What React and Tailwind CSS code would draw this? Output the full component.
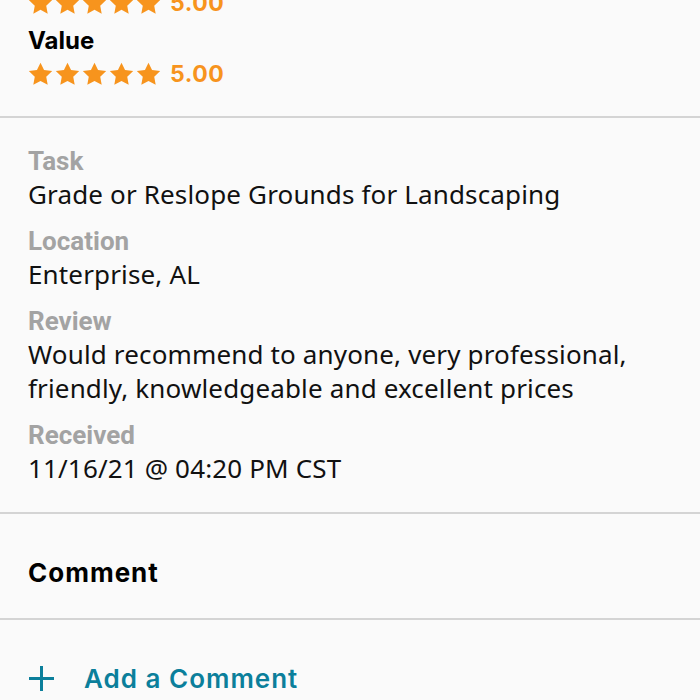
import React from "react";

const Star = () => (
  <svg width="25" height="24" viewBox="0 0 24 23" className="shrink-0">
    <path d="M12 0.6l3.4 7.1 7.8 1-5.7 5.4 1.4 7.7L12 18.1l-6.9 3.7 1.4-7.7L0.8 8.7l7.8-1z" fill="#f7941d" />
  </svg>
);

const Rating = () => (
  <div className="flex items-center h-[24px]">
    <div className="flex gap-[2px]">
      <Star /><Star /><Star /><Star /><Star />
    </div>
    <span className="ml-[9px] text-[23px] font-bold tracking-[0.5px] text-[#f7941d] leading-none" style={{ fontFamily: "Inter, sans-serif" }}>5.00</span>
  </div>
);

const Field = ({ label, children }) => (
  <div className="flex flex-col">
    <div className="text-[26px] font-bold text-[#a3a3a3] leading-[32px]" style={{ fontFamily: "Roboto, sans-serif" }}>{label}</div>
    <div className="text-[26px] tracking-[0.15px] text-[#111] leading-[34px]" style={{ fontFamily: "'Noto Sans', sans-serif" }}>{children}</div>
  </div>
);

export default function App() {
  return (
    <div className="w-[700px] h-[700px] overflow-hidden bg-[#fafafa]">
      <div className="-mt-[9px] px-[28px] h-[125px] flex flex-col">
        <Rating />
        <div className="mt-[11px] text-[24px] font-bold text-black leading-[30px]" style={{ fontFamily: "Inter, sans-serif" }}>Value</div>
        <div className="mt-[6px]"><Rating /></div>
      </div>
      <div className="h-[2px] bg-[#d4d4d4]" />
      <div className="px-[28px] pt-[27px] pb-[27px] flex flex-col gap-[14px]">
        <Field label="Task">Grade or Reslope Grounds for Landscaping</Field>
        <Field label="Location">Enterprise, AL</Field>
        <Field label="Review">Would recommend to anyone, very professional, friendly, knowledgeable and excellent prices</Field>
        <Field label="Received">11/16/21 @ 04:20 PM CST</Field>
      </div>
      <div className="h-[2px] bg-[#d4d4d4]" />
      <div className="px-[28px] h-[104px] pt-[12px] flex items-center text-[26px] font-bold tracking-[1px] text-black" style={{ fontFamily: "Inter, sans-serif" }}>Comment</div>
      <div className="h-[2px] bg-[#d4d4d4]" />
      <div className="px-[28px] pt-[39px] flex items-center gap-[29px] text-[#0b7f9b]">
        <svg width="27" height="27" viewBox="0 0 27 27" className="shrink-0">
          <path d="M13.5 1v25M1 13.5h25" stroke="#0b7f9b" strokeWidth="3" />
        </svg>
        <span className="text-[26px] font-semibold tracking-[1px] leading-[39px]" style={{ fontFamily: "Inter, sans-serif" }}>Add a Comment</span>
      </div>
    </div>
  );
}
